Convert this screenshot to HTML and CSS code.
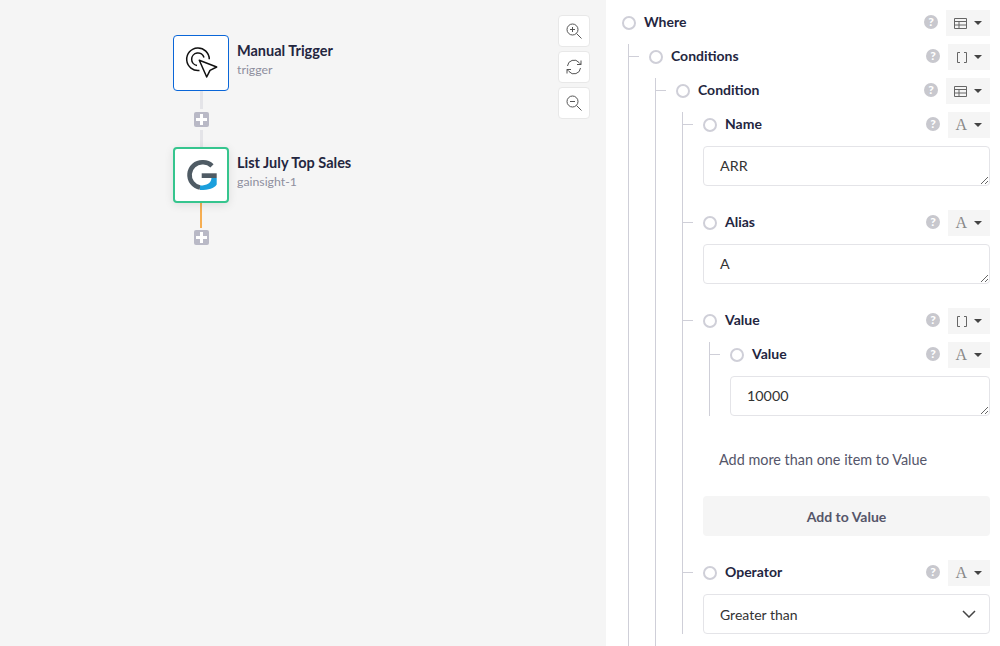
FILE: index.html
```html
<!DOCTYPE html>
<html lang="en">
<head>
    <meta charset="UTF-8">
    <title>Workflow Builder</title>
    <link rel="stylesheet" href="styles.css">
</head>
<body>
    <div class="canvas">
        <div class="line line-gray line-a"></div>
        <div class="add-step add-a"><span></span></div>
        <div class="line line-gray line-b"></div>
        <div class="line line-orange line-c"></div>
        <div class="add-step add-b"><span></span></div>

        <div class="node node-trigger">
            <div class="node-box box-blue">
                <svg width="34" height="34" viewBox="0 0 34 34" fill="none" stroke="#111" stroke-width="1.5">
                    <path d="M25.300 13.300A11.300 11.300 0 1 0 15.500 24.500"/>
                    <path d="M20 11.500A6.300 6.300 0 1 0 13 19.500"/>
                    <path d="M15.300 14.300L32.700 21L26 24.300L22.700 31Z" stroke-linejoin="round"/>
                </svg>
            </div>
            <div class="node-text">
                <div class="node-title">Manual Trigger</div>
                <div class="node-sub">trigger</div>
            </div>
        </div>

        <div class="node node-gainsight">
            <div class="node-box box-green">
                <svg width="32" height="32" viewBox="0 0 32 32" fill="none">
                    <path d="M27 6.800A12.700 12.700 0 0 0 17.500 3.300A12.700 12.700 0 0 0 15 28.500" stroke="#4f5b64" stroke-width="4.600"/>
                    <path d="M16.700 14.300H31.700V19H16.700Z" fill="#4f5b64"/>
                    <path d="M31.700 19V25.500C29 29.500 24 31 15 31V26.500C22 26.500 26 24.500 26.500 19Z" fill="#1b9fdc"/>
                </svg>
            </div>
            <div class="node-text">
                <div class="node-title">List July Top Sales</div>
                <div class="node-sub">gainsight-1</div>
            </div>
        </div>

        <div class="zoom-controls">
            <button class="zoom-btn">
                <svg width="16" height="16" viewBox="0 0 16 16" fill="none" stroke="#555"><circle cx="6.500" cy="6.500" r="5.500"/><path d="M10.500 10.500L15.500 15.500M6.500 4v5M4 6.500h5"/></svg>
            </button>
            <button class="zoom-btn">
                <svg width="16" height="16" viewBox="0 0 16 16" fill="none" stroke="#555"><path d="M1.500 7A6.500 6.500 0 0 1 13 3.500L15 5.500M15 1.500V5.500H11"/><path d="M14.500 9A6.500 6.500 0 0 1 3 12.500L1 10.500M1 14.500V10.500H5"/></svg>
            </button>
            <button class="zoom-btn">
                <svg width="16" height="16" viewBox="0 0 16 16" fill="none" stroke="#555"><circle cx="6.500" cy="6.500" r="5.500"/><path d="M10.500 10.500L15.500 15.500M4 6.500h5"/></svg>
            </button>
        </div>
    </div>

    <div class="panel">
        <div class="field-row">
            <span class="radio"></span><span class="label">Where</span>
            <span class="help">?</span>
            <span class="type-btn"><svg width="13" height="11" viewBox="0 0 13 11" fill="none" stroke="#666"><path d="M.5.5h12v10H.5zM.5 3.500h12M.5 7h12M5 3.500v7"/></svg><i class="caret"></i></span>
        </div>
        <div class="children open">
            <div class="field-row tick">
                <span class="radio"></span><span class="label">Conditions</span>
                <span class="help">?</span>
                <span class="type-btn narrow"><svg width="10" height="11" viewBox="0 0 10 11" fill="none" stroke="#666"><path d="M3 .5H.5v10H3M7 .5h2.500v10H7"/></svg><i class="caret"></i></span>
            </div>
            <div class="children open">
                <div class="field-row tick">
                    <span class="radio"></span><span class="label">Condition</span>
                    <span class="help">?</span>
                    <span class="type-btn"><svg width="13" height="11" viewBox="0 0 13 11" fill="none" stroke="#666"><path d="M.5.5h12v10H.5zM.5 3.500h12M.5 7h12M5 3.500v7"/></svg><i class="caret"></i></span>
                </div>
                <div class="children">
                    <div class="field-row tick">
                        <span class="radio"></span><span class="label">Name</span>
                        <span class="help">?</span>
                        <span class="type-btn narrow"><span class="type-a">A</span><i class="caret"></i></span>
                    </div>
                    <textarea class="text-input">ARR</textarea>

                    <div class="field-row tick spaced">
                        <span class="radio"></span><span class="label">Alias</span>
                        <span class="help">?</span>
                        <span class="type-btn narrow"><span class="type-a">A</span><i class="caret"></i></span>
                    </div>
                    <textarea class="text-input">A</textarea>

                    <div class="field-row tick spaced">
                        <span class="radio"></span><span class="label">Value</span>
                        <span class="help">?</span>
                        <span class="type-btn narrow"><svg width="10" height="11" viewBox="0 0 10 11" fill="none" stroke="#666"><path d="M3 .5H.5v10H3M7 .5h2.500v10H7"/></svg><i class="caret"></i></span>
                    </div>
                    <div class="children">
                        <div class="field-row tick">
                            <span class="radio"></span><span class="label">Value</span>
                            <span class="help">?</span>
                            <span class="type-btn narrow"><span class="type-a">A</span><i class="caret"></i></span>
                        </div>
                        <textarea class="text-input">10000</textarea>
                    </div>
                    <p class="add-hint">Add more than one item to Value</p>
                    <button class="add-btn">Add to Value</button>

                    <div class="field-row tick spaced">
                        <span class="radio"></span><span class="label">Operator</span>
                        <span class="help">?</span>
                        <span class="type-btn narrow"><span class="type-a">A</span><i class="caret"></i></span>
                    </div>
                    <div class="select-box">
                        <span>Greater than</span>
                        <svg width="14" height="8" viewBox="0 0 14 8" fill="none" stroke="#444" stroke-width="1.500"><path d="M1 1l6 6 6-6"/></svg>
                    </div>
                </div>
            </div>
        </div>
    </div>
</body>
</html>
```

FILE: styles.css
```css
* {
    box-sizing: border-box;
}
html, body {
    height: 100%;
}
body {
    margin: 0;
    display: flex;
    height: 646px;
    overflow: hidden;
    background: #fff;
    font-family: Lato, "Noto Sans", Arial, sans-serif;
    font-size: 14px;
    color: #1f2138;
}

/* canvas */
.canvas {
    position: relative;
    width: 606px;
    flex: none;
    background: #f5f5f5;
}
.node {
    position: absolute;
    left: 173px;
    display: flex;
    gap: 8px;
}
.node-trigger {
    top: 35px;
}
.node-gainsight {
    top: 147px;
}
.node-box {
    width: 56px;
    height: 56px;
    background: #fff;
    border-radius: 4px;
    display: flex;
    align-items: center;
    justify-content: center;
}
.box-blue {
    border: 1px solid #0a66d8;
}
.box-green {
    border: 2px solid #36c58e;
    box-shadow: 0 2px 10px rgba(0,0,0,0.1);
}
.node-text {
    padding-top: 7px;
}
.node-title {
    font-weight: 700;
    font-size: 14.500px;
    line-height: 18px;
    color: #24263f;
    white-space: nowrap;
}
.node-sub {
    font-size: 12.300px;
    line-height: 16px;
    margin-top: 2px;
    color: #8e8f9e;
}
.line {
    position: absolute;
    left: 200px;
    width: 3px;
}
.line-gray {
    background: #e4e4e8;
}
.line-orange {
    width: 2px;
    background: #f6ae52;
}
.line-a {
    top: 91px;
    height: 18px;
}
.line-b {
    top: 130px;
    height: 17px;
}
.line-c {
    top: 203px;
    height: 25px;
}
.add-step {
    position: absolute;
    left: 194px;
    width: 15px;
    height: 15px;
    background: #b9b9c6;
    border-radius: 2px;
}
.add-step span::before,
.add-step span::after {
    content: "";
    position: absolute;
    background: #fff;
}
.add-step span::before {
    left: 2px;
    right: 2px;
    top: 6px;
    height: 3px;
}
.add-step span::after {
    top: 2px;
    bottom: 2px;
    left: 6px;
    width: 3px;
}
.add-a {
    top: 112px;
}
.add-b {
    top: 230px;
}
.zoom-controls {
    position: absolute;
    left: 558px;
    top: 15px;
    display: flex;
    flex-direction: column;
    gap: 4px;
}
.zoom-btn {
    width: 32px;
    height: 32px;
    padding: 0;
    background: #fff;
    border: 1px solid #e8e8e8;
    border-radius: 4px;
    display: flex;
    align-items: center;
    justify-content: center;
}

/* right panel */
.panel {
    flex: 1;
    height: 646px;
    overflow: hidden;
    padding: 10px 10px 0 16px;
}
.field-row {
    position: relative;
    display: flex;
    align-items: center;
    height: 26px;
    margin-bottom: 8px;
}
.field-row.spaced {
    margin-top: 24px;
}
.tick::before {
    content: "";
    position: absolute;
    left: -21px;
    top: 12px;
    width: 11px;
    height: 1px;
    background: #cfcfd8;
}
.radio {
    width: 14px;
    height: 14px;
    border: 2px solid #cfcfd8;
    border-radius: 50%;
    flex: none;
}
.label {
    margin-left: 8px;
    margin-top: -4px;
    font-weight: 700;
    color: #24263f;
    flex: 1;
}
.help {
    width: 14px;
    height: 14px;
    margin-right: 8px;
    margin-top: -2px;
    border-radius: 50%;
    background: #c8c8ce;
    color: #fff;
    font-size: 12px;
    font-weight: 900;
    line-height: 14px;
    text-align: center;
}
.type-btn {
    width: 44px;
    height: 26px;
    background: #f5f5f5;
    display: flex;
    align-items: center;
    justify-content: flex-end;
    gap: 7px;
    padding-right: 8px;
    color: #666;
}
.type-btn.narrow {
    width: 42px;
}
.type-a {
    font-family: "Liberation Serif", serif;
    font-size: 16px;
    color: #888;
}
.caret {
    width: 0;
    height: 0;
    border-left: 4px solid transparent;
    border-right: 4px solid transparent;
    border-top: 4px solid #444;
}
.children {
    margin-left: 6px;
    padding-left: 20px;
    border-left: 1px solid #cfcfd8;
}
.children.open {
    padding-bottom: 60px;
}
.text-input {
    display: block;
    width: 100%;
    height: 40px;
    padding: 10px 16px;
    border: 1px solid #e4e4e8;
    border-radius: 4px;
    font-family: inherit;
    font-size: 14.300px;
    line-height: 18px;
    color: #333;
    outline: none;
}
.add-hint {
    margin: 35px 0 0 16px;
    font-size: 14.400px;
    line-height: 18px;
    color: #55566a;
}
.add-btn {
    display: block;
    width: 100%;
    height: 40px;
    margin-top: 27px;
    border: 0;
    border-radius: 4px;
    background: #f5f5f5;
    font-family: inherit;
    font-size: 14px;
    font-weight: 700;
    color: #55566a;
}
.select-box {
    height: 40px;
    padding: 0 13px 0 16px;
    border: 1px solid #e4e4e8;
    border-radius: 4px;
    display: flex;
    align-items: center;
    justify-content: space-between;
    color: #333;
}
```
